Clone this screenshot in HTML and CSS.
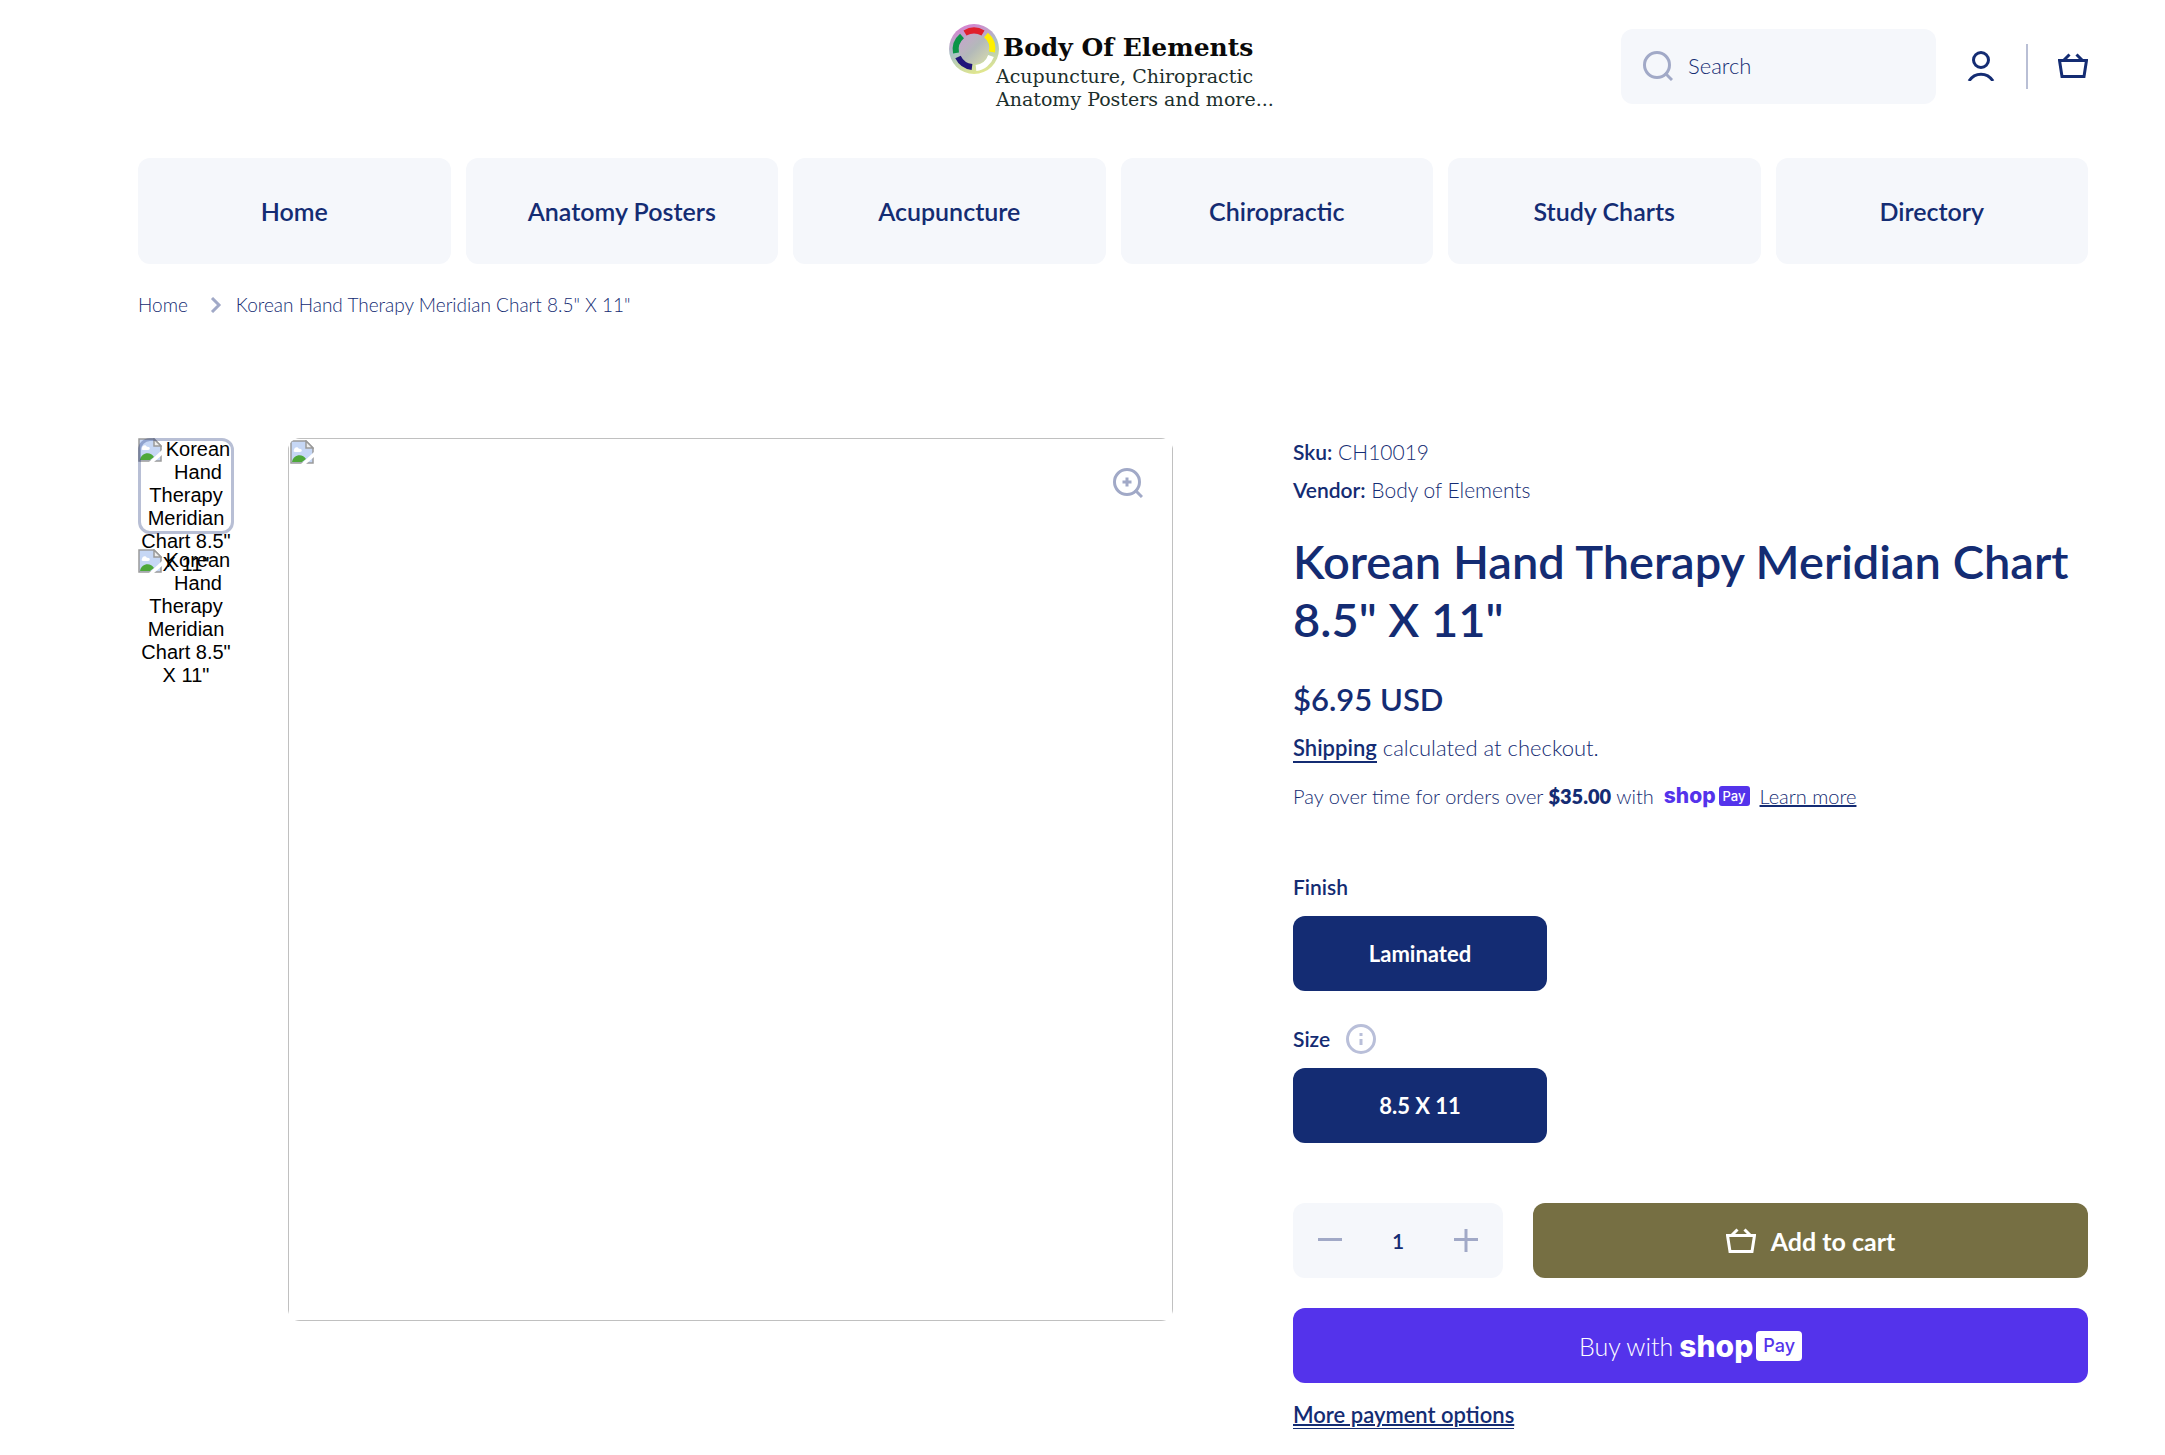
FILE: index.html
```html
<!DOCTYPE html>
<html lang="en">
<head>
    <meta charset="UTF-8">
    <meta name="viewport" content="width=device-width, initial-scale=1.0">
    <title>Korean Hand Therapy Meridian Chart 8.5" X 11"</title>
    <link rel="stylesheet" href="styles.css">
</head>
<body>
    <!-- Shared icons -->
    <svg class="sprite" aria-hidden="true">
        <symbol id="icon-basket" viewBox="0 0 30 30">
            <path d="M1.5 9.5h27l-2.5 16h-22z M5.5 9.5l6-6 M24.5 9.5l-6-6" fill="none" stroke="currentColor" stroke-width="3"/>
        </symbol>
        <symbol id="icon-broken" viewBox="0 0 24 24">
            <path d="M1 1h15l7 7v15H1z" fill="#c6d7f5" stroke="#9a9a9a" stroke-width="1.5"/>
            <path d="M4 10c0-3 4-4 5-1 3-1 4 3 1 3H5c-1 0-2-1-1-2z" fill="#fff"/>
            <path d="M2 22c1-8 11-9 14-3l-4 3z" fill="#4ea83a"/>
            <path d="M16 1v7h7z" fill="#eee" stroke="#9a9a9a" stroke-width="1.5"/>
            <path d="M24 12L11 24h5l8-7z" fill="#fff"/>
        </symbol>
    </svg>

    <div class="page">
        <header class="header">
            <a href="#" class="logo" aria-label="Body Of Elements">
                <svg width="328" height="90" viewBox="0 0 328 90">
                    <defs>
                        <linearGradient id="ring" x1="0.3" y1="0" x2="0.6" y2="1">
                            <stop offset="0" stop-color="#d77fd0"/>
                            <stop offset="0.5" stop-color="#a9c4c4"/>
                            <stop offset="1" stop-color="#e3e88c"/>
                        </linearGradient>
                        <linearGradient id="core" x1="0" y1="0" x2="1" y2="1">
                            <stop offset="0" stop-color="#c9a3cf"/>
                            <stop offset="0.5" stop-color="#b3b9b9"/>
                            <stop offset="1" stop-color="#d8dcae"/>
                        </linearGradient>
                    </defs>
                    <circle cx="25" cy="28" r="25" fill="url(#ring)"/>
                    <circle cx="25" cy="28" r="15" fill="url(#core)"/>
                    <g fill="none" stroke-width="6">
                        <path d="M16 12a18 18 0 0 1 18 0" stroke="#e0202b"/>
                        <path d="M37 14a18 18 0 0 1 6 17" stroke="#fff000"/>
                        <path d="M42 35a18 18 0 0 1-15 12" stroke="#fff"/>
                        <path d="M23 46a18 18 0 0 1-14-10" stroke="#21157a"/>
                        <path d="M7 32a18 18 0 0 1 6-17" stroke="#0b9447"/>
                    </g>
                    <text class="logo-name" x="54" y="35">Body Of Elements</text>
                    <text class="logo-tag" x="47" y="62">Acupuncture, Chiropractic</text>
                    <text class="logo-tag" x="47" y="85">Anatomy Posters and more...</text>
                </svg>
            </a>
            <div class="header-tools">
                <form class="search" role="search">
                    <svg width="30" height="30" viewBox="0 0 30 30" fill="none" stroke="currentColor" stroke-width="3">
                        <circle cx="14" cy="14" r="12.5"/>
                        <path d="M22 22l7 7"/>
                    </svg>
                    <input type="search" placeholder="Search" aria-label="Search">
                </form>
                <a href="#" class="tool" aria-label="Account">
                    <svg width="30" height="30" viewBox="0 0 30 30" fill="none" stroke="currentColor" stroke-width="3">
                        <circle cx="15" cy="9" r="7.5"/>
                        <path d="M3 30c6-9 18-9 24 0"/>
                    </svg>
                </a>
                <span class="divider"></span>
                <a href="#" class="tool" aria-label="Cart">
                    <svg width="30" height="30"><use href="#icon-basket"/></svg>
                </a>
            </div>
        </header>

        <nav class="menu" aria-label="Main">
            <a href="#">Home</a>
            <a href="#">Anatomy Posters</a>
            <a href="#">Acupuncture</a>
            <a href="#">Chiropractic</a>
            <a href="#">Study Charts</a>
            <a href="#">Directory</a>
        </nav>

        <nav class="breadcrumbs" aria-label="Breadcrumbs">
            <a href="#">Home</a>
            <svg width="12" height="16" viewBox="0 0 12 16" fill="none" stroke="currentColor" stroke-width="3">
                <path d="M2 1l7 7-7 7"/>
            </svg>
            <span>Korean Hand Therapy Meridian Chart 8.5" X 11"</span>
        </nav>

        <main class="product">
            <div class="gallery">
                <div class="thumbs">
                    <button type="button" class="thumb active">
                        <svg class="broken" width="24" height="24"><use href="#icon-broken"/></svg>
                        Korean Hand Therapy Meridian Chart 8.5" X 11"
                    </button>
                    <button type="button" class="thumb">
                        <svg class="broken" width="24" height="24"><use href="#icon-broken"/></svg>
                        Korean Hand Therapy Meridian Chart 8.5" X 11"
                    </button>
                </div>
                <div class="media">
                    <div class="media-frame">
                        <svg class="broken" width="24" height="24"><use href="#icon-broken"/></svg>
                    </div>
                    <button type="button" class="zoom" aria-label="Zoom">
                        <svg width="30" height="30" viewBox="0 0 30 30" fill="none" stroke="currentColor" stroke-width="3">
                            <circle cx="14" cy="14" r="12.5"/>
                            <path d="M22 22l7 7M14 9.5v9M9.5 14h9"/>
                        </svg>
                    </button>
                </div>
            </div>

            <form class="info">
                <p class="meta"><strong>Sku:</strong> CH10019</p>
                <p class="meta"><strong>Vendor:</strong> Body of Elements</p>
                <h1>Korean Hand Therapy Meridian Chart 8.5" X 11"</h1>
                <p class="price">$6.95 USD</p>
                <p class="shipping"><a href="#">Shipping</a> calculated at checkout.</p>
                <p class="installments">
                    <span>Pay over time for orders over <b>$35.00</b> with</span>
                    <span class="shop-pay"><span class="shop">shop</span><span class="pay">Pay</span></span>
                    <a href="#">Learn more</a>
                </p>

                <fieldset class="option">
                    <legend>Finish</legend>
                    <label class="choice">
                        <input type="radio" name="finish" checked>
                        <span>Laminated</span>
                    </label>
                </fieldset>
                <fieldset class="option">
                    <legend>
                        Size
                        <svg width="30" height="30" viewBox="0 0 30 30" fill="none" stroke="currentColor" stroke-width="3">
                            <circle cx="15" cy="15" r="13.5"/>
                            <path d="M15 9v3M15 15v6"/>
                        </svg>
                    </legend>
                    <label class="choice">
                        <input type="radio" name="size" checked>
                        <span>8.5 X 11</span>
                    </label>
                </fieldset>

                <div class="buy-row">
                    <div class="quantity">
                        <button type="button" aria-label="Decrease quantity">
                            <svg width="24" height="24" viewBox="0 0 24 24" stroke="currentColor" stroke-width="3"><path d="M0 10.5h24"/></svg>
                        </button>
                        <input type="text" value="1" inputmode="numeric" aria-label="Quantity">
                        <button type="button" aria-label="Increase quantity">
                            <svg width="24" height="24" viewBox="0 0 24 24" stroke="currentColor" stroke-width="3"><path d="M0 10.5h24M12 0v23"/></svg>
                        </button>
                    </div>
                    <button type="submit" class="add-to-cart">
                        <svg width="30" height="30"><use href="#icon-basket"/></svg>
                        Add to cart
                    </button>
                </div>
                <button type="button" class="buy-now">
                    Buy with
                    <span class="shop-pay large"><span class="shop">shop</span><span class="pay">Pay</span></span>
                </button>
                <a href="#" class="more-options">More payment options</a>
            </form>
        </main>
    </div>
</body>
</html>
```
FILE: styles.css
```css
* {
    box-sizing: border-box;
}

body {
    margin: 0;
    background-color: #ffffff;
    color: #142c73;
    font-family: Lato, 'Open Sans', sans-serif;
    font-size: 21px;
    font-weight: 300;
    line-height: 30px;
}

a {
    color: inherit;
}

p,
h1 {
    margin: 0;
}

svg {
    display: block;
    flex-shrink: 0;
}

button,
input {
    font: inherit;
    color: inherit;
    border: none;
    background: none;
    padding: 0;
}

button {
    cursor: pointer;
}

.sprite {
    display: none;
}

.page {
    padding: 0 77px 0 138px;
}

/* Header */
.header {
    display: grid;
    grid-template-columns: 1fr auto 1fr;
    align-items: center;
    padding: 21px 0 47px;
}

.logo {
    grid-column: 2;
}

.logo-name,
.logo-tag {
    font-family: 'DejaVu Serif', serif;
    fill: #1c2f2c;
    font-size: 19px;
    font-weight: 400;
}

.logo-name {
    fill: #0a0a0a;
    font-size: 25px;
    font-weight: 700;
}

.header-tools {
    display: flex;
    justify-content: flex-end;
    align-items: center;
    gap: 30px;
}

.search {
    display: flex;
    align-items: center;
    gap: 15px;
    width: 315px;
    height: 75px;
    padding: 0 22px;
    border-radius: 12px;
    background-color: #f5f7fb;
    color: #a1a9c7;
}

.search input {
    flex: 1;
    min-width: 0;
    color: #142c73;
    font-size: 22px;
    outline: none;
}

.search input::placeholder {
    color: #142c73;
}

.divider {
    width: 2px;
    height: 45px;
    background-color: #b9bfd5;
}

/* Navigation */
.menu {
    display: grid;
    grid-template-columns: repeat(6, 1fr);
    gap: 15px;
}

.menu a {
    padding: 38px 10px;
    border-radius: 12px;
    background-color: #f5f7fb;
    font-size: 25px;
    font-weight: 600;
    text-align: center;
    text-decoration: none;
}

.breadcrumbs {
    display: flex;
    align-items: center;
    padding: 29px 0 121px;
    font-size: 19px;
    line-height: 24px;
}

.breadcrumbs a {
    text-decoration: none;
}

.breadcrumbs svg {
    margin: 0 14px 0 22px;
    color: #a1a9c7;
}

/* Gallery */
.product {
    display: grid;
    grid-template-columns: 1035fr 795fr;
    gap: 120px;
    align-items: start;
}

.gallery {
    display: flex;
    align-items: flex-start;
    gap: 54px;
}

.thumbs {
    display: flex;
    flex-direction: column;
    gap: 15px;
    width: 96px;
}

.thumb {
    position: relative;
    display: block;
    align-content: start;
    height: 96px;
    color: #000000;
    font-family: 'Liberation Sans', Arial, sans-serif;
    font-size: 20px;
    font-weight: 400;
    line-height: 23px;
    text-align: center;
}

.thumb .broken {
    float: left;
}

.thumb.active::after {
    content: '';
    position: absolute;
    inset: 0;
    border: 3px solid rgba(20, 44, 115, 0.3);
    border-radius: 12px;
}

.media {
    position: relative;
    flex: 1;
    border-radius: 12px;
    overflow: hidden;
}

.media-frame {
    aspect-ratio: 885 / 883;
    padding: 1px;
    border: 1px solid #c0c0c0;
}

.zoom {
    position: absolute;
    top: 30px;
    right: 30px;
    color: #a1a9c7;
}

/* Product info */
.meta {
    line-height: 28px;
}

.meta + .meta {
    margin-top: 10px;
}

.meta strong {
    font-weight: 600;
}

h1 {
    margin: 28px 0 32px;
    font-size: 47px;
    font-weight: 600;
    line-height: 58px;
}

.price {
    font-size: 31px;
    font-weight: 600;
    line-height: 38px;
}

.shipping {
    margin: 15px 0 18px;
    font-size: 22px;
}

.shipping a {
    font-weight: 600;
    text-decoration: none;
    border-bottom: 2px solid #142c73;
}

.installments {
    display: flex;
    align-items: center;
    gap: 10px;
    margin-bottom: 61px;
    font-size: 20px;
}

.installments b {
    font-weight: 800;
}

.shop-pay {
    display: inline-flex;
    align-items: center;
    gap: 3px;
    color: #5433eb;
    font-family: Inter, sans-serif;
    line-height: 20px;
}

.shop {
    font-size: 21px;
    font-weight: 800;
}

.pay {
    padding: 0 4px;
    border-radius: 3px;
    background-color: #5433eb;
    color: #ffffff;
    font-size: 13px;
    font-weight: 500;
}

.option {
    min-width: 0;
    margin: 0 0 33px;
    padding: 0;
    border: none;
}

.option legend {
    display: flex;
    align-items: center;
    gap: 16px;
    margin-bottom: 14px;
    padding: 0;
    font-weight: 600;
}

.option legend svg {
    color: #b9bfd9;
}

.choice {
    display: inline-grid;
    width: 254px;
    height: 75px;
    place-items: center;
    vertical-align: top;
    border-radius: 12px;
    background-color: #142c73;
    color: #ffffff;
    font-size: 22px;
    font-weight: 700;
    cursor: pointer;
}

.choice input,
.choice span {
    grid-area: 1 / 1;
}

.choice input {
    appearance: none;
    margin: 0;
}

.buy-row {
    display: flex;
    gap: 30px;
    margin: 60px 0 30px;
}

.quantity {
    display: flex;
    align-items: center;
    justify-content: space-between;
    width: 210px;
    height: 75px;
    padding: 0 25px;
    border-radius: 12px;
    background-color: #f5f7fb;
}

.quantity button {
    color: #a1a9c7;
}

.quantity input {
    width: 60px;
    font-weight: 600;
    text-align: center;
}

.add-to-cart,
.buy-now {
    display: flex;
    align-items: center;
    justify-content: center;
    height: 75px;
    border-radius: 12px;
    color: #ffffff;
    font-size: 25px;
}

.add-to-cart {
    flex: 1;
    gap: 15px;
    background-color: #766f43;
    font-weight: 700;
}

.buy-now {
    width: 100%;
    gap: 6px;
    margin-bottom: 17px;
    background-color: #5433eb;
}

.large {
    color: #ffffff;
    line-height: 30px;
}

.large .shop {
    font-size: 30px;
}

.large .pay {
    padding: 0 7px;
    border-radius: 4px;
    background-color: #ffffff;
    color: #5433eb;
    font-size: 18px;
}

.more-options {
    font-size: 22px;
    font-weight: 600;
    text-decoration-thickness: 2px;
    border-bottom: 1px solid #142c73;
}
```
